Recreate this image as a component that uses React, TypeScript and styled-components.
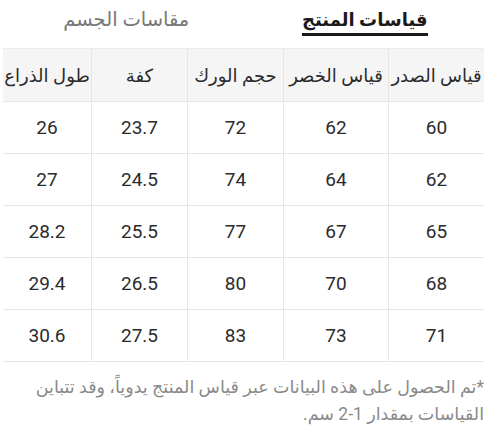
import React from 'react'
import styled, { createGlobalStyle } from 'styled-components'

const GlobalStyle = createGlobalStyle`
  body {
    margin: 0;
    background: #ffffff;
    font-family: Roboto, "DejaVu Sans", sans-serif;
  }
`

const Page = styled.div`
  direction: rtl;
  width: 477px;
  margin-left: 7px;
`

const Tabs = styled.div`
  display: flex;
  height: 48px;
`

const Tab = styled.div<{ $active?: boolean }>`
  flex: 1;
  display: flex;
  justify-content: center;
  padding-top: 7px;
  span {
    font-size: ${(p) => (p.$active ? '18px' : '19.5px')};
    line-height: 26px;
    font-weight: ${(p) => (p.$active ? 700 : 400)};
    color: ${(p) => (p.$active ? '#1a1a1a' : '#777777')};
    border-bottom: ${(p) => (p.$active ? '3px solid #1a1a1a' : '3px solid transparent')};
    height: 26px;
  }
`

const Table = styled.table`
  width: 477px;
  border-collapse: collapse;
  table-layout: fixed;
  color: #2b2b2b;
`

const HeadCell = styled.th<{ $w: number }>`
  width: ${(p) => p.$w}px;
  height: 52px;
  padding: 0;
  background: #f5f5f5;
  font-size: 18px;
  font-weight: 400;
  text-align: center;
  white-space: nowrap;
  border-top: 1px solid #ececec;
  border-bottom: 1px solid #e6e6e6;
  & + & {
    border-right: 1px solid #e6e6e6;
  }
`

const Cell = styled.td`
  height: 51px;
  padding: 0;
  font-size: 19px;
  text-align: center;
  border-bottom: 1px solid #e6e6e6;
  & + & {
    border-right: 1px solid #e6e6e6;
  }
`

const Note = styled.p`
  margin: 12px 0 0;
  font-size: 17.5px;
  line-height: 27px;
  color: #8a8a8a;
`

const headers: [string, number][] = [
  ['قياس الصدر', 95],
  ['قياس الخصر', 104],
  ['حجم الورك', 95],
  ['كفة', 95],
  ['طول الذراع', 88],
]

const rows = [
  ['60', '62', '72', '23.7', '26'],
  ['62', '64', '74', '24.5', '27'],
  ['65', '67', '77', '25.5', '28.2'],
  ['68', '70', '80', '26.5', '29.4'],
  ['71', '73', '83', '27.5', '30.6'],
]

export default function App() {
  return (
    <>
      <GlobalStyle />
      <Page>
        <Tabs>
          <Tab $active>
            <span>قياسات المنتج</span>
          </Tab>
          <Tab>
            <span>مقاسات الجسم</span>
          </Tab>
        </Tabs>
        <Table>
          <thead>
            <tr>
              {headers.map(([h, w]) => (
                <HeadCell key={h} $w={w}>
                  {h}
                </HeadCell>
              ))}
            </tr>
          </thead>
          <tbody>
            {rows.map((r, i) => (
              <tr key={i}>
                {r.map((v, j) => (
                  <Cell key={j}>{v}</Cell>
                ))}
              </tr>
            ))}
          </tbody>
        </Table>
        <Note>
          *تم الحصول على هذه البيانات عبر قياس المنتج يدوياً، وقد تتباين القياسات بمقدار 1-2 سم.
        </Note>
      </Page>
    </>
  )
}
